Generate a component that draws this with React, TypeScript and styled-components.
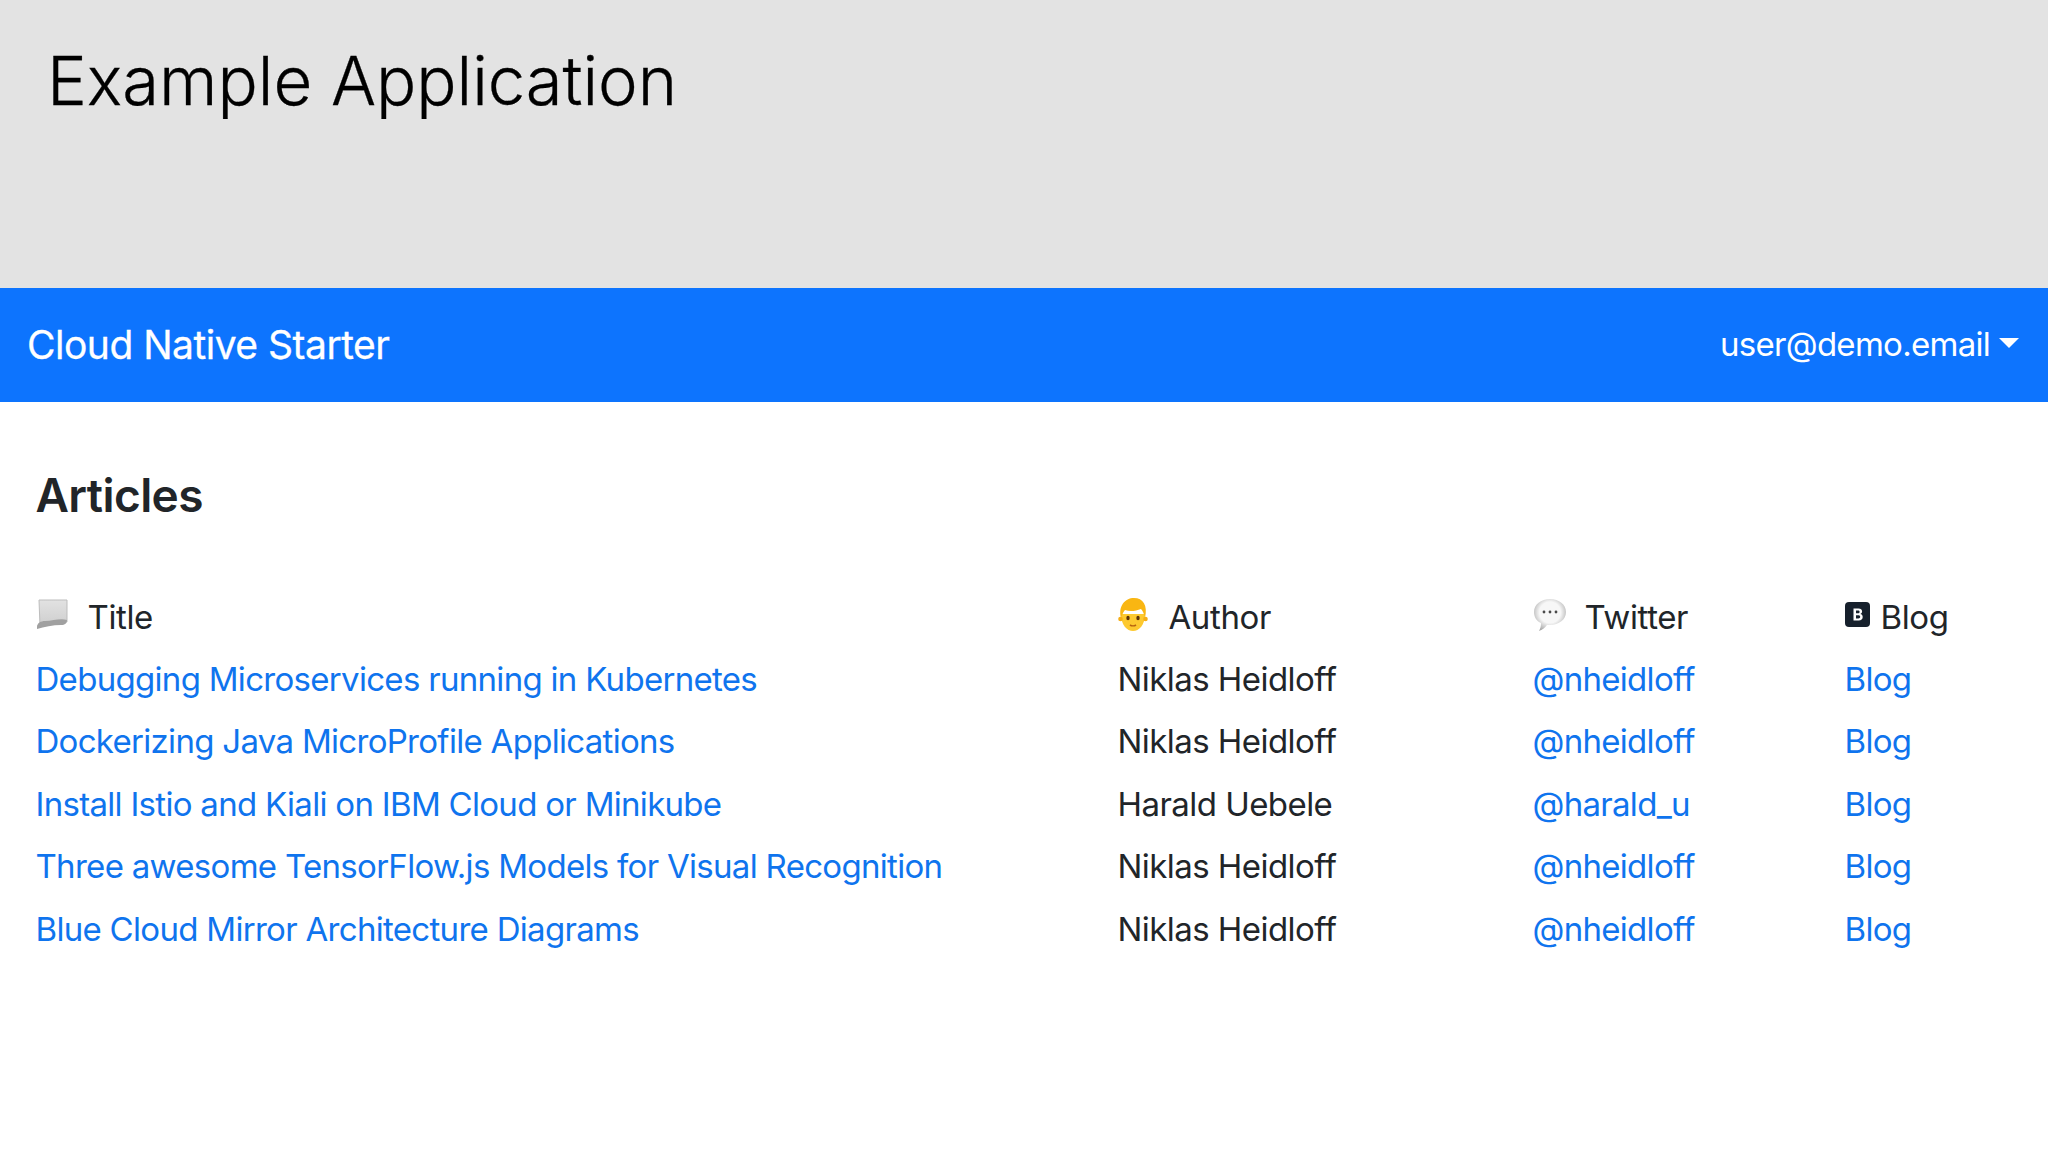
import React from "react";
import styled, { createGlobalStyle } from "styled-components";

const Global = createGlobalStyle`
  html, body { margin: 0; padding: 0; background: #fff; }
  body { font-family: Inter, "Liberation Sans", sans-serif; color: #212529; }
`;
const Page = styled.div`
  width: 2048px; height: 1152px; display: flex; flex-direction: column; overflow: hidden; background: #fff;
`;
const Banner = styled.header`
  height: 288px; flex: none; box-sizing: border-box; background: #e3e3e3; padding: 39px 0 0 47px;
`;
const BannerTitle = styled.h1`
  margin: 0; font: 300 67px/84px Inter, sans-serif; letter-spacing: -0.05px; color: #000;
  -webkit-text-stroke: 0.3px #000;
`;
const Navbar = styled.nav`
  height: 114px; flex: none; box-sizing: border-box; background: #0d74fe; color: #fff;
  display: flex; align-items: center; justify-content: space-between; padding: 0 29px 2px 27px;
`;
const Brand = styled.div`
  font-size: 39px; font-weight: 400; letter-spacing: -0.5px; -webkit-text-stroke: 0.3px #fff;
`;
const UserMenu = styled.div`
  display: flex; align-items: center; gap: 9px; font-size: 33px; letter-spacing: -0.72px;
`;
const Caret = styled.span`
  width: 0; height: 0; border-left: 10px solid transparent; border-right: 10px solid transparent; border-top: 10px solid #fff; margin-top: -3px;
`;
const Content = styled.main`
  padding: 65px 36px 0 35.5px;
`;
const Heading = styled.h2`
  margin: 0 0 62px; font-size: 46px; line-height: 56px; font-weight: 600; letter-spacing: -0.6px; color: #212529;
`;
const Table = styled.div`
  display: grid; grid-template-columns: 1082px 415px 312px 1fr; grid-auto-rows: 62.5px; align-items: center;
  font-size: 33px; letter-spacing: -0.7px;
`;
const HeaderCell = styled.div`
  display: flex; align-items: center; gap: ${(p: { $gap?: number }) => p.$gap ?? 20}px; white-space: nowrap; letter-spacing: -0.4px;
  padding-top: 1px;
  svg { margin-top: -4px; }
`;
const Link = styled.a`
  color: #0f74ee; text-decoration: none; white-space: nowrap;
`;
const Text = styled.div`
  white-space: nowrap; letter-spacing: -0.55px;
`;

const ScrollIcon = () => (
  <svg width="32" height="32" viewBox="0 0 32 32">
    <defs>
      <linearGradient id="sc" x1="0" y1="0" x2="0" y2="1"><stop offset="0" stopColor="#e2e2e2" /><stop offset="1" stopColor="#cecece" /></linearGradient>
    </defs>
    <path d="M3 1h28v22c-9-1-19 1-27 4z" fill="url(#sc)" stroke="#bdbdbd" />
    <path d="M1 28c0-4 4-6 8-6 8 0 15-3 22-1 0 3-2 5-6 5-8 0-17 2-24 4z" fill="#a0a0a0" />
  </svg>
);
const PersonIcon = () => (
  <svg width="30" height="34" viewBox="0 0 30 34">
    <path d="M3 16c0 11 6 17 12 17s12-6 12-17z" fill="#fdc92f" />
    <path d="M3 20C0 8 7 0 16 0c9 0 14 7 11 20-1-4-2-7-4-9-5 2-11 3-16 1-2 2-3 5-4 8z" fill="#f9b612" />
    <circle cx="2.5" cy="21" r="2.3" fill="#f6ae14" />
    <circle cx="27.5" cy="21" r="2.3" fill="#f6ae14" />
    <ellipse cx="10" cy="20" rx="1.7" ry="2.3" fill="#5a3208" />
    <ellipse cx="20" cy="20" rx="1.7" ry="2.3" fill="#5a3208" />
    <path d="M12 27c1.5 1 4.5 1 6 0" stroke="#b8640f" strokeWidth="1.6" fill="none" />
  </svg>
);
const BubbleIcon = () => (
  <svg width="34" height="34" viewBox="0 0 34 34">
    <defs>
      <radialGradient id="bb" cx="0.5" cy="0.42" r="0.6"><stop offset="0.55" stopColor="#f7f7f7" /><stop offset="1" stopColor="#a9a9a9" /></radialGradient>
    </defs>
    <path d="M17 1c9 0 16 5.5 16 13s-7 13-16 13c-1 0-2 0-3 0-2 3-5 5-8 6 1.5-2.5 2-5 2-8C3.5 23 1 19 1 14 1 6.5 8 1 17 1z" fill="url(#bb)" />
    <circle cx="11" cy="14" r="1.4" fill="#4a4a4a" />
    <circle cx="17" cy="14" r="1.4" fill="#4a4a4a" />
    <circle cx="23" cy="14" r="1.4" fill="#4a4a4a" />
  </svg>
);
const BoldIcon = () => (
  <svg width="25" height="25" viewBox="0 0 25 25">
    <rect width="25" height="25" rx="4" fill="#16202c" />
    <path d="M8.5 6.500h5c2.300 0 3.600 1.200 3.600 3 0 1.200-.7 2.100-1.700 2.500 1.400.3 2.300 1.400 2.300 2.900 0 2.100-1.500 3.500-4 3.500H8.500zM11 8.500v2.800h2c1 0 1.600-.5 1.600-1.400s-.6-1.400-1.600-1.400zm0 4.700v3.300h2.300c1.200 0 1.900-.6 1.900-1.700s-.7-1.600-1.900-1.600z" fill="#fff" />
  </svg>
);

const rows = [
  ["Debugging Microservices running in Kubernetes", "Niklas Heidloff", "@nheidloff"],
  ["Dockerizing Java MicroProfile Applications", "Niklas Heidloff", "@nheidloff"],
  ["Install Istio and Kiali on IBM Cloud or Minikube", "Harald Uebele", "@harald_u"],
  ["Three awesome TensorFlow.js Models for Visual Recognition", "Niklas Heidloff", "@nheidloff"],
  ["Blue Cloud Mirror Architecture Diagrams", "Niklas Heidloff", "@nheidloff"],
];

export default function App() {
  return (
    <Page>
      <Global />
      <Banner><BannerTitle>Example Application</BannerTitle></Banner>
      <Navbar>
        <Brand>Cloud Native Starter</Brand>
        <UserMenu>user@demo.email<Caret /></UserMenu>
      </Navbar>
      <Content>
        <Heading>Articles</Heading>
        <Table>
          <HeaderCell><ScrollIcon />Title</HeaderCell>
          <HeaderCell $gap={21}><PersonIcon />Author</HeaderCell>
          <HeaderCell $gap={18}><BubbleIcon />Twitter</HeaderCell>
          <HeaderCell $gap={11}><BoldIcon />Blog</HeaderCell>
          {rows.map((r) => (
            <React.Fragment key={r[0]}>
              <Link href="#">{r[0]}</Link>
              <Text>{r[1]}</Text>
              <Link href="#">{r[2]}</Link>
              <Link href="#">Blog</Link>
            </React.Fragment>
          ))}
        </Table>
      </Content>
    </Page>
  );
}
